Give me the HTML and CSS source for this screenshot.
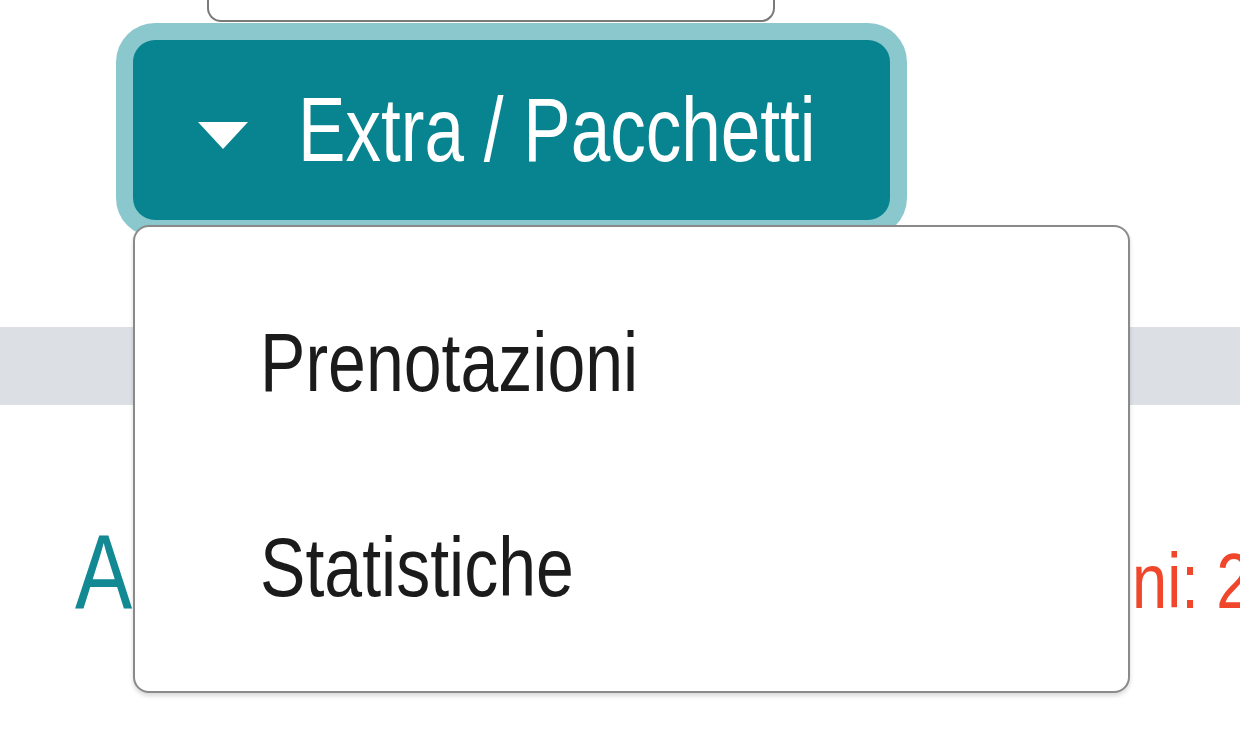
FILE: index.html
```html
<!DOCTYPE html>
<html lang="it">
<head>
    <meta charset="UTF-8">
    <meta name="viewport" content="width=device-width, initial-scale=1.0">
    <title>Extra / Pacchetti</title>
    <link rel="stylesheet" href="styles.css">
</head>
<body>
    <div class="page">
        <div class="search-field"></div>

        <div class="toolbar">
            <div class="menu-wrap">
                <button class="menu-btn">
                    <span class="caret"></span>
                    <span class="narrow">Extra / Pacchetti</span>
                </button>
                <div class="menu">
                    <a class="menu-item"><span class="narrow">Prenotazioni</span></a>
                    <a class="menu-item"><span class="narrow">Statistiche</span></a>
                </div>
            </div>
        </div>

        <div class="band"></div>

        <div class="title-row">
            <h2 class="title"><span class="narrow">Attività</span></h2>
            <span class="count"><span class="narrow">Prenotazioni: 2</span></span>
        </div>
    </div>
</body>
</html>
```

FILE: styles.css
```css
body { margin: 0; background: #fff; font-family: "Liberation Sans", Arial, sans-serif; }
.page { width: 1240px; height: 737px; overflow: hidden; }
.narrow { display: inline-block; white-space: nowrap; transform: scaleX(0.81); transform-origin: left center; }
.search-field { margin-left: 207px; width: 564px; height: 20px; border: 2px solid #7a7a7a; border-top: none; border-radius: 0 0 14px 14px; }
.toolbar { height: 287px; padding: 18px 0 0 133px; }
.menu-wrap { position: relative; z-index: 10; width: 757px; }
.menu-btn { display: flex; align-items: center; gap: 50px; width: 757px; height: 180px; padding: 0 0 0 65px; border: none; border-radius: 22px; background: #07848f; color: #fff; font: inherit; font-size: 90px; white-space: nowrap; box-shadow: 0 0 0 17px #8bc8cd; cursor: pointer; }
.menu-btn .narrow { transform: scaleX(0.79); }
.caret { flex-shrink: 0; width: 0; height: 0; margin-top: 10px; border-left: 25px solid transparent; border-right: 25px solid transparent; border-top: 27px solid #fff; }
.menu { position: absolute; left: 0; top: 185px; width: 993px; height: 411px; padding: 33px 0 20px; border: 2px solid #8a8a8a; border-radius: 16px; background: #fff; box-shadow: 0 3px 4px rgba(0, 0, 0, 0.15); }
.menu-item { display: flex; align-items: center; height: 205px; padding-left: 125px; font-size: 84px; color: #1b1b1b; cursor: pointer; }
.band { height: 78px; background: #dcdfe4; }
.title-row { display: flex; align-items: baseline; margin-top: 113px; padding-left: 75px; white-space: nowrap; }
.title { flex-shrink: 0; width: 755px; margin: 0; font-size: 106px; font-weight: normal; line-height: 1; color: #138993; }
.count { flex-shrink: 0; font-size: 78px; color: #f0472c; }
```
